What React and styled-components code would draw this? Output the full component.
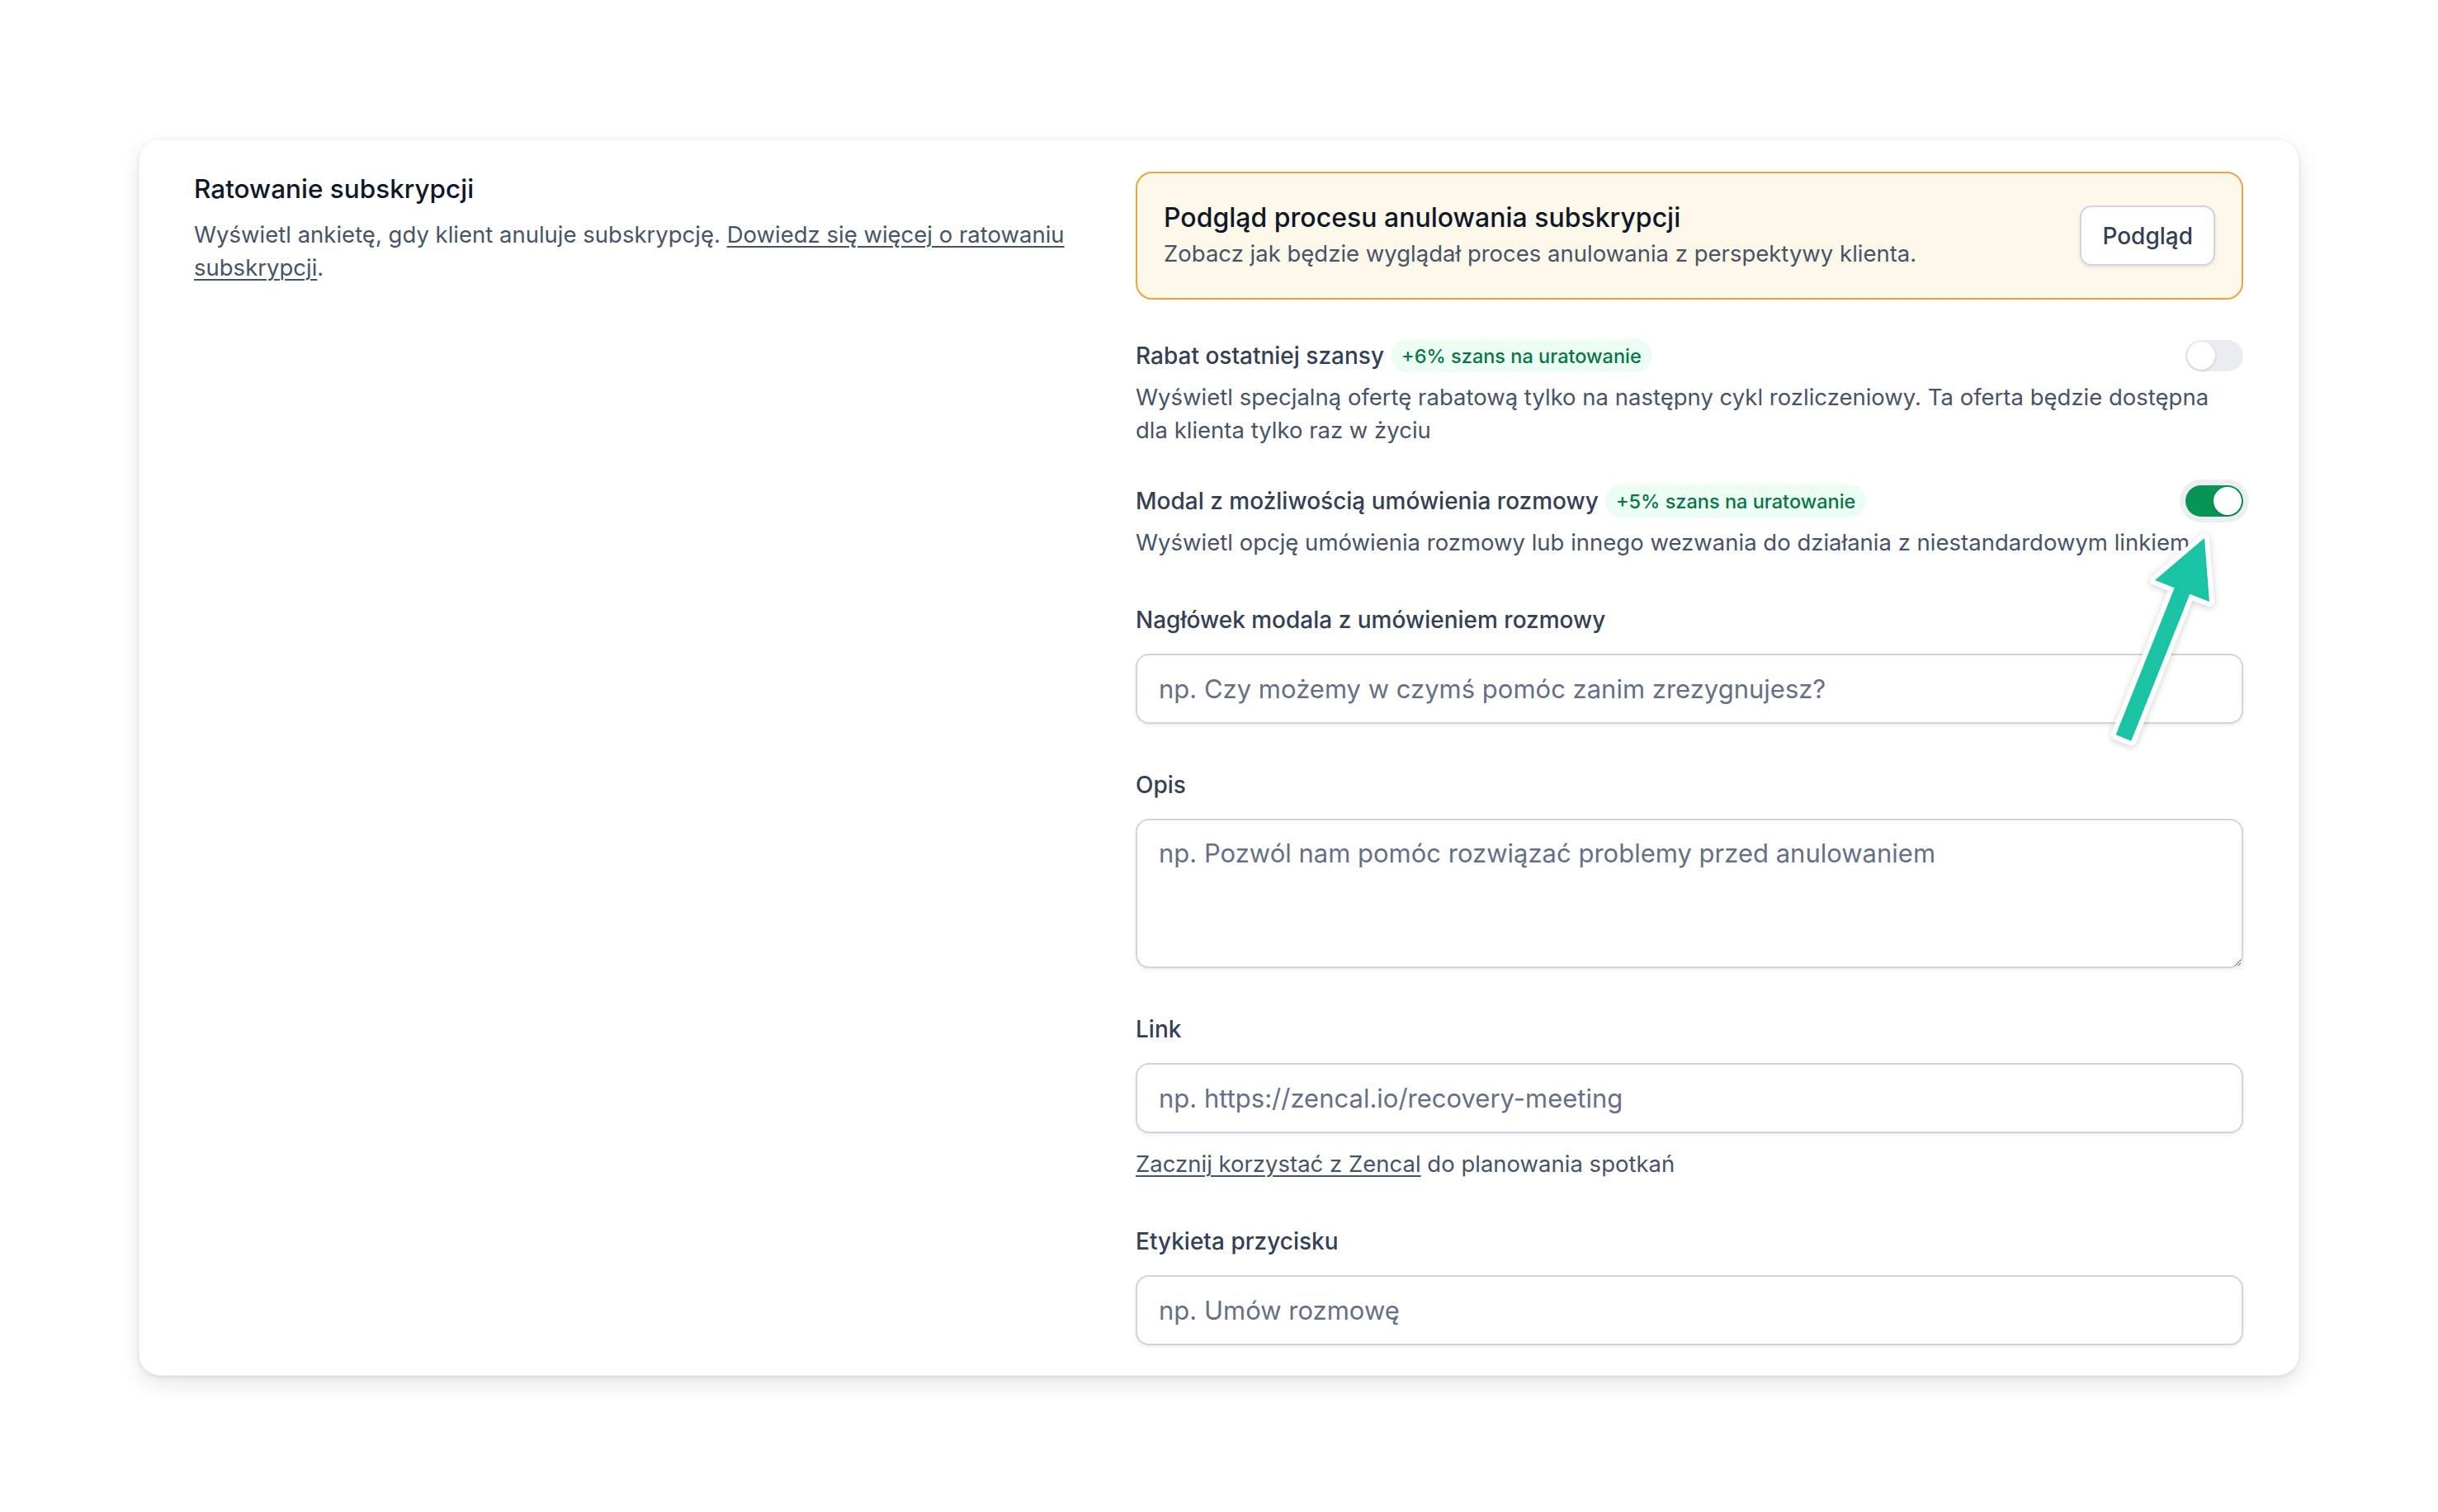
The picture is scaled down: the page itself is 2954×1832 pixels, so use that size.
import React from 'react';
import styled, { createGlobalStyle } from 'styled-components';

const GlobalStyle = createGlobalStyle`
    * { box-sizing: border-box; }
    body {
        margin: 0;
        background: #ffffff;
        font-family: Inter, "Noto Sans", sans-serif;
        color: #101828;
    }
`;

const Page = styled.div`
    padding: 168px;
`;

const Card = styled.section`
    position: relative;
    display: grid;
    grid-template-columns: 1077px 1fr;
    column-gap: 64px;
    padding: 39px 67px 36px 66px;
    background: #fff;
    border-radius: 26px;
    border: 1px solid #f0f1f3;
    box-shadow: 0 10px 26px rgba(16, 24, 40, 0.1), 0 2px 4px rgba(16, 24, 40, 0.08);
`;

const Intro = styled.div`
    padding-top: 1px;
`;

const Title = styled.h2`
    margin: 0;
    font-size: 31.5px;
    line-height: 40px;
    font-weight: 500;
    color: #101828;
`;

const Text = styled.p`
    margin: ${(p) => p.$top || 0}px 0 0;
    font-size: 27.5px;
    line-height: 40px;
    color: #475467;
`;

const Underline = styled.a`
    color: inherit;
    text-decoration: underline;
    text-underline-offset: 4px;
    text-decoration-thickness: 2px;
    cursor: pointer;
`;

const Stack = styled.div`
    display: flex;
    flex-direction: column;
`;

const Section = styled.div`
    margin-top: ${(p) => p.$gap || 0}px;
`;

const PreviewBox = styled.div`
    display: flex;
    align-items: center;
    justify-content: space-between;
    height: 155px;
    padding: 0 32px;
    border: 2px solid #eba43f;
    border-radius: 20px;
    background: #fef8eb;
`;

const PreviewTitle = styled.div`
    font-size: 32px;
    line-height: 40px;
    font-weight: 500;
    color: #101828;
`;

const PreviewButton = styled.button`
    height: 73px;
    padding: 0 25px;
    font-family: inherit;
    font-size: 28px;
    font-weight: 500;
    color: #344054;
    background: #fff;
    border: 2px solid #d0d5dd;
    border-radius: 14px;
    box-shadow: 0 2px 4px rgba(16, 24, 40, 0.08);
    cursor: pointer;
`;

const OptionHead = styled.div`
    display: flex;
    align-items: center;
    justify-content: space-between;
    height: 40px;
`;

const OptionName = styled.div`
    display: flex;
    align-items: center;
    gap: 8px;
`;

const Label = styled.label`
    display: block;
    font-size: 28px;
    line-height: 40px;
    font-weight: 500;
    color: #344054;
`;

const Badge = styled.span`
    display: inline-flex;
    align-items: center;
    height: 40px;
    padding: 0 13px;
    border-radius: 20px;
    background: #ecfdf3;
    color: #067647;
    font-size: 23.5px;
    font-weight: 500;
`;

const Switch = styled.button`
    position: relative;
    width: 70px;
    height: 38px;
    padding: 0;
    border: none;
    border-radius: 19px;
    background: ${(p) => (p.$on ? '#079455' : '#eaecf0')};
    box-shadow: ${(p) => (p.$on ? '0 0 0 7px #eceef2' : 'none')};
    cursor: pointer;

    &::after {
        content: '';
        position: absolute;
        top: 2px;
        left: ${(p) => (p.$on ? '34px' : '2px')};
        width: 34px;
        height: 34px;
        border-radius: 50%;
        background: #fff;
        box-shadow: 0 1px 3px rgba(16, 24, 40, 0.2);
    }
`;

const Field = styled(Section)`
    display: flex;
    flex-direction: column;
    gap: 21px;
`;

const controlStyles = `
    width: 100%;
    padding: 0 26px;
    font-family: Inter, "Noto Sans", sans-serif;
    font-size: 31px;
    color: #101828;
    background: #fff;
    border: 2px solid #d0d5dd;
    border-radius: 16px;
    box-shadow: 0 2px 4px rgba(16, 24, 40, 0.08);
    outline: none;

    &::placeholder {
        color: #667085;
    }
`;

const Input = styled.input`
    ${controlStyles}
    height: 85px;
`;

const TextArea = styled.textarea`
    ${controlStyles}
    height: 181px;
    padding-top: 20px;
    line-height: 40px;
    resize: vertical;
`;

const Hint = styled.div`
    margin-top: -4px;
    font-size: 27.5px;
    line-height: 40px;
    color: #475467;
`;

const Pointer = styled.svg`
    position: absolute;
    left: 2372px;
    top: 448px;
    width: 200px;
    height: 300px;
    overflow: visible;
    pointer-events: none;
    filter: drop-shadow(0 2px 4px rgba(0, 0, 0, 0.18));
`;

const Option = ({ gap, name, badge, on, children }) => (
    <Section $gap={gap}>
        <OptionHead>
            <OptionName>
                <Label as="span">{name}</Label>
                <Badge>{badge}</Badge>
            </OptionName>
            <Switch $on={on} aria-pressed={on} />
        </OptionHead>
        <Text $top={10}>{children}</Text>
    </Section>
);

const App = () => (
    <Page>
        <GlobalStyle />
        <Card>
            <Intro>
                <Title>Ratowanie subskrypcji</Title>
                <Text $top={15}>
                    Wyświetl ankietę, gdy klient anuluje subskrypcję.{' '}
                    <Underline>Dowiedz się więcej o ratowaniu subskrypcji</Underline>.
                </Text>
            </Intro>

            <Stack>
                <PreviewBox>
                    <div>
                        <PreviewTitle>Podgląd procesu anulowania subskrypcji</PreviewTitle>
                        <Text $top={3}>Zobacz jak będzie wyglądał proces anulowania z perspektywy klienta.</Text>
                    </div>
                    <PreviewButton>Podgląd</PreviewButton>
                </PreviewBox>

                <Option gap={48} name="Rabat ostatniej szansy" badge="+6% szans na uratowanie" on={false}>
                    Wyświetl specjalną ofertę rabatową tylko na następny cykl rozliczeniowy. Ta oferta będzie dostępna dla klienta tylko raz w życiu
                </Option>

                <Option gap={46} name="Modal z możliwością umówienia rozmowy" badge="+5% szans na uratowanie" on>
                    Wyświetl opcję umówienia rozmowy lub innego wezwania do działania z niestandardowym linkiem
                </Option>

                <Field $gap={54}>
                    <Label>Nagłówek modala z umówieniem rozmowy</Label>
                    <Input placeholder="np. Czy możemy w czymś pomóc zanim zrezygnujesz?" />
                </Field>

                <Field $gap={54}>
                    <Label>Opis</Label>
                    <TextArea placeholder="np. Pozwól nam pomóc rozwiązać problemy przed anulowaniem" />
                </Field>

                <Field $gap={54}>
                    <Label>Link</Label>
                    <Input placeholder="np. https://zencal.io/recovery-meeting" />
                    <Hint>
                        <Underline>Zacznij korzystać z Zencal</Underline> do planowania spotkań
                    </Hint>
                </Field>

                <Field $gap={54}>
                    <Label>Etykieta przycisku</Label>
                    <Input placeholder="np. Umów rozmowę" />
                </Field>
            </Stack>

            {/* arrow callout pointing at the enabled switch */}
            <Pointer viewBox="0 0 200 300">
                <polygon
                    points="130,35 136,112 112.3,102.8 41.3,280.8 22.7,273.3 93.7,95.3 70,86"
                    fill="#19c3a3"
                    stroke="#fff"
                    strokeWidth="12"
                    strokeLinejoin="round"
                    paintOrder="stroke"
                />
            </Pointer>
        </Card>
    </Page>
);

export default App;
